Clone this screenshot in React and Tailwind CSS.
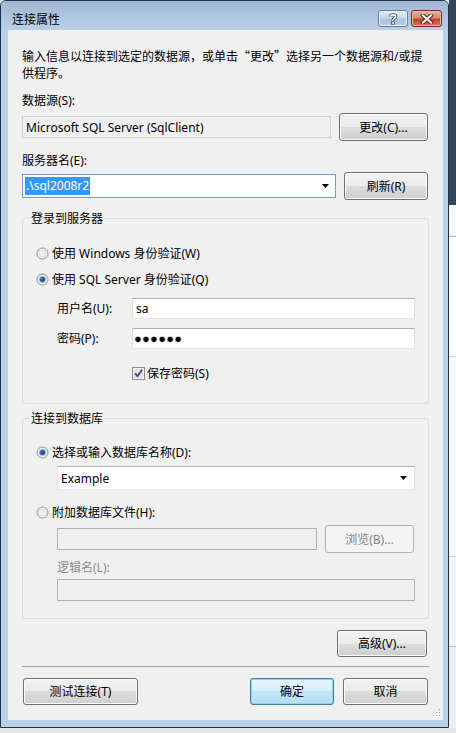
import React from "react";

const btnBase =
  "flex items-center justify-center rounded-[3px] border text-[12px] leading-[17px]";
const btnNormal =
  "border-[#707070] text-black bg-[linear-gradient(#f2f2f2_0%,#ebebeb_50%,#dddddd_50%,#cfcfcf_100%)] shadow-[inset_0_0_0_1px_#fbfbfb]";
const btnDefault =
  "border-[#3c7fb1] text-black bg-[linear-gradient(#e5f4fc_0%,#d4ecfa_50%,#c4e5f8_50%,#b6ddf4_100%)] shadow-[inset_0_0_0_1px_#8fd3f3]";
const btnDisabled = "border-[#adb2b5] bg-[#f4f4f4] text-[#838383]";

const textBox =
  "border border-[#abadb3] border-l-[#dbdfe6] border-r-[#dbdfe6] border-b-[#e3e9ef] bg-white";
const disabledBox = "border border-[#adb2b5] bg-[#f0f0f0]";

function Radio({ checked }) {
  return (
    <svg width="13" height="13" viewBox="0 0 13 13" className="shrink-0">
      <circle cx="6.5" cy="6.5" r="5.5" fill="#f3f3f3" stroke="#8e8f8f" />
      <circle cx="6.5" cy="6.5" r="4" fill="#dcdcdc" />
      <circle cx="6.5" cy="6.5" r="3" fill="#eeeeee" />
      {checked && (
        <>
          <circle cx="6.5" cy="6.5" r="3.3" fill="#7db3e4" />
          <circle cx="6.5" cy="6.5" r="2.4" fill="#1b4a85" />
          <circle cx="5.8" cy="5.8" r="0.9" fill="#5f93cf" />
        </>
      )}
    </svg>
  );
}

function Check() {
  return (
    <svg width="13" height="13" viewBox="0 0 13 13" className="shrink-0">
      <rect x="0.5" y="0.5" width="12" height="12" fill="#f4f4f4" stroke="#8e8f8f" />
      <rect x="2" y="2" width="9" height="9" fill="#e1e1e1" />
      <path
        d="M3 6.3 L5.4 9.2 L10.2 2.8"
        fill="none"
        stroke="#3b4d7e"
        strokeWidth="1.8"
        strokeLinejoin="round"
      />
    </svg>
  );
}

function Arrow() {
  return (
    <svg width="7" height="4" viewBox="0 0 7 4" className="shrink-0">
      <polygon points="0,0 7,0 3.5,4" fill="#000" />
    </svg>
  );
}

function RightStrip() {
  return (
    <div className="flex flex-1 flex-col">
      <div className="h-[205px] bg-[#33465a]" />
      <div className="h-[32px] border-b border-[#b9b9b9] bg-[#f7f7f7]" />
      <div className="h-[120px] border-b border-[#d0d0d0] bg-white" />
      <div className="h-[200px] border-b border-[#c8c8c8] bg-[#fafafa]" />
      <div className="h-[90px] border-b border-[#c0c0c0] bg-[#f4f4f4]" />
      <div className="flex-1 bg-[#eeeeee]" />
    </div>
  );
}

export default function App() {
  return (
    <div className="flex h-[733px] w-[456px] flex-col overflow-hidden bg-[#e8e8e8] [font-family:'Noto_Sans','Noto_Sans_CJK_SC',sans-serif]">
      <div className="flex h-[728px]">
        {/* window */}
        <div className="flex w-[449px] flex-col overflow-hidden rounded-t-[6px] border border-[#223244] bg-[#b9d1ea]">
          {/* title bar */}
          <div className="flex h-[29px] bg-[linear-gradient(#9fb8d3,#b9d0e8)]">
            <div className="pl-[11px] pt-[10px] text-[12px] leading-[17px] text-black">
              连接属性
            </div>
            <div className="ml-auto flex gap-[3px] pr-[6px] pt-[9px]">
              <div className="flex h-[17px] w-[30px] items-center justify-center rounded-[3px] border border-[#6a7c92] bg-[linear-gradient(#e3edf7_0%,#c8d9ec_45%,#a9c2de_55%,#b9d0e8_100%)] shadow-[inset_0_0_0_1px_#e9f1f9]">
                <svg width="10" height="12" viewBox="0 0 10 12">
                  <path
                    d="M2.3 3.6 C2.3 1.3 7.7 1.3 7.7 3.6 C7.7 5.4 5 5.3 5 7.4"
                    fill="none"
                    stroke="#3d4c5e"
                    strokeWidth="3.4"
                  />
                  <path
                    d="M2.3 3.6 C2.3 1.3 7.7 1.3 7.7 3.6 C7.7 5.4 5 5.3 5 7.4"
                    fill="none"
                    stroke="#ffffff"
                    strokeWidth="1.6"
                  />
                  <rect x="3.2" y="8.4" width="3.6" height="3.2" fill="#3d4c5e" />
                  <rect x="4.1" y="9.2" width="1.8" height="1.6" fill="#ffffff" />
                </svg>
              </div>
              <div className="flex h-[17px] w-[31px] items-center justify-center rounded-[3px] border border-[#7a2a1c] bg-[linear-gradient(#eab1a1_0%,#d98a74_45%,#c2452c_55%,#d9745a_100%)] shadow-[inset_0_0_0_1px_#efb9aa]">
                <svg width="14" height="10" viewBox="0 0 14 10">
                  <path
                    d="M3 1.5 L11 8.5 M11 1.5 L3 8.5"
                    stroke="#5b1a10"
                    strokeWidth="4"
                    strokeLinecap="square"
                  />
                  <path
                    d="M3 1.5 L11 8.5 M11 1.5 L3 8.5"
                    stroke="#ffffff"
                    strokeWidth="2.2"
                    strokeLinecap="square"
                  />
                </svg>
              </div>
            </div>
          </div>

          {/* frame + client */}
          <div className="flex pl-[7px] pr-[5px]">
            <div className="relative h-[690px] w-[435px] bg-[#f0f0f0] px-[14px] pt-[17px] text-[12px] leading-[17px] text-black">
              <p className="whitespace-nowrap">
                输入信息以连接到选定的数据源，或单击
                <span className="[font-family:'Noto_Sans_CJK_SC',sans-serif]">“更改”</span>
                选择另一个数据源和/或提
                <br />
                供程序。
              </p>

              <div className="mt-[10px]">数据源(S):</div>
              <div className="mt-[4px] flex h-[28px] items-center justify-between pr-[1px]">
                <div className="flex h-[22px] w-[309px] items-center border border-[#d2d2d2] pl-[3px]">
                  Microsoft SQL Server (SqlClient)
                </div>
                <button className={`${btnBase} ${btnNormal} h-[28px] w-[89px]`}>
                  更改(C)...
                </button>
              </div>

              <div className="mt-[11px]">服务器名(E):</div>
              <div className="mt-[3px] flex h-[28px] items-center justify-between pr-[1px]">
                <div className="flex h-[24px] w-[314px] items-center border border-[#6f9ccf] bg-white pl-[2px] pr-[6px]">
                  <span className="bg-[#3399ff] px-[1px] leading-[18px] text-white">
                    .\sql2008r2
                  </span>
                  <div className="ml-auto">
                    <Arrow />
                  </div>
                </div>
                <button className={`${btnBase} ${btnNormal} h-[28px] w-[84px]`}>
                  刷新(R)
                </button>
              </div>

              {/* group: login */}
              <div className="mt-[18px] rounded-[3px] border border-[#d5dfe5] pb-[21px]">
                <div className="-mt-[9px] ml-[7px] w-fit bg-[#f0f0f0] px-[1px]">
                  登录到服务器
                </div>
                <div className="mt-[18px] flex items-center gap-[3px] pl-[13px]">
                  <Radio />
                  <span>使用 Windows 身份验证(W)</span>
                </div>
                <div className="mt-[9px] flex items-center gap-[3px] pl-[13px]">
                  <Radio checked />
                  <span>使用 SQL Server 身份验证(Q)</span>
                </div>
                <div className="mt-[10px] flex h-[21px] items-center pl-[34px]">
                  <span className="w-[75px]">用户名(U):</span>
                  <div className={`${textBox} flex h-[21px] w-[283px] items-center pl-[3px]`}>
                    sa
                  </div>
                </div>
                <div className="mt-[9px] flex h-[21px] items-center pl-[34px]">
                  <span className="w-[75px]">密码(P):</span>
                  <div
                    className={`${textBox} flex h-[21px] w-[283px] items-center pl-[1px] text-[13px] tracking-[0.2px] [font-family:'Liberation_Sans',sans-serif]`}
                  >
                    ●●●●●●
                  </div>
                </div>
                <div className="mt-[16px] flex items-center gap-[2px] pl-[109px]">
                  <Check />
                  <span>保存密码(S)</span>
                </div>
              </div>

              {/* group: database */}
              <div className="mt-[14px] rounded-[3px] border border-[#d5dfe5] pb-[17px]">
                <div className="-mt-[9px] ml-[7px] w-fit bg-[#f0f0f0] px-[1px]">
                  连接到数据库
                </div>
                <div className="mt-[17px] flex items-center gap-[3px] pl-[13px]">
                  <Radio checked />
                  <span>选择或输入数据库名称(D):</span>
                </div>
                <div className="ml-[34px] mt-[5px] flex h-[24px] w-[358px] items-center border border-[#abadb3] border-b-[#e3e9ef] border-l-[#e2e3ea] border-r-[#dbdfe6] bg-white pl-[3px] pr-[7px]">
                  <span>Example</span>
                  <div className="ml-auto">
                    <Arrow />
                  </div>
                </div>
                <div className="mt-[14px] flex items-center gap-[3px] pl-[13px]">
                  <Radio />
                  <span>附加数据库文件(H):</span>
                </div>
                <div className="mt-[4px] flex h-[28px] items-center pl-[34px]">
                  <div className={`${disabledBox} h-[22px] w-[260px]`} />
                  <button className={`${btnBase} ${btnDisabled} ml-[8px] h-[28px] w-[89px]`}>
                    浏览(B)...
                  </button>
                </div>
                <div className="mt-[6px] pl-[34px] text-[#8d8d8d]">逻辑名(L):</div>
                <div className={`${disabledBox} ml-[34px] mt-[3px] h-[22px] w-[358px]`} />
              </div>

              <div className="mt-[11px] flex justify-end pr-[2px]">
                <button className={`${btnBase} ${btnNormal} h-[27px] w-[90px]`}>
                  高级(V)...
                </button>
              </div>

              <div className="mt-[9px] h-px bg-[#a0a0a0]" />

              <div className="mt-[11px] flex items-center pl-[1px] pr-[1px]">
                <button className={`${btnBase} ${btnNormal} h-[27px] w-[115px]`}>
                  测试连接(T)
                </button>
                <button className={`${btnBase} ${btnDefault} ml-auto h-[27px] w-[84px]`}>
                  确定
                </button>
                <button className={`${btnBase} ${btnNormal} ml-[9px] h-[27px] w-[85px]`}>
                  取消
                </button>
              </div>

              {/* size grip */}
              <svg
                width="8"
                height="8"
                viewBox="0 0 8 8"
                className="absolute bottom-[3px] right-[2px]"
              >
                {[
                  [6, 0],
                  [6, 3],
                  [3, 3],
                  [6, 6],
                  [3, 6],
                  [0, 6],
                ].map(([x, y]) => (
                  <g key={`${x}-${y}`}>
                    <rect x={x + 1} y={y + 1} width="1" height="1" fill="#ffffff" />
                    <rect x={x} y={y} width="1" height="1" fill="#a6a6a6" />
                  </g>
                ))}
              </svg>
            </div>
          </div>
          <div className="flex-1" />
        </div>
        <RightStrip />
      </div>
      <div className="h-[5px] bg-[#e6e6e6]" />
    </div>
  );
}
